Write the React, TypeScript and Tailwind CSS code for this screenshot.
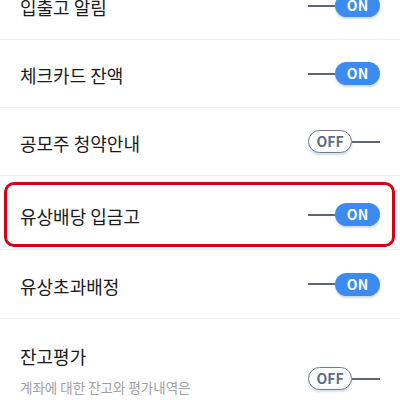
import React from "react";

type Row = {
  title: string;
  on: boolean;
  desc?: string[];
  highlight?: boolean;
  h: string;
};

const rows: Row[] = [
  { title: "입출고 알림", on: true, h: "h-[68px]" },
  { title: "체크카드 잔액", on: true, h: "h-[68px]" },
  { title: "공모주 청약안내", on: false, h: "h-[68px]" },
  { title: "유상배당 입금고", on: true, highlight: true, h: "h-[74px]" },
  { title: "유상초과배정", on: true, h: "h-[69px]" },
  {
    title: "잔고평가",
    on: false,
    desc: ["계좌에 대한 잔고와 평가내역은", "매월 말일에 발송됩니다"],
    h: "h-[110px]",
  },
];

function Toggle({ on }: { on: boolean }) {
  if (on) {
    return (
      <div className="flex items-center">
        <div className="w-[27px] h-[2px] bg-[#5d6674]" />
        <div className="w-[45px] h-[23px] rounded-full bg-[#3b8bf2] flex items-center justify-center text-white text-[14px] font-bold shadow-[0_2px_2px_rgba(120,150,190,0.35)]">
          ON
        </div>
      </div>
    );
  }
  return (
    <div className="flex items-center">
      <div className="w-[44px] h-[23px] rounded-full border-[1.5px] border-[#6a7d96] bg-white flex items-center justify-center text-[#5d6f86] text-[14px] font-bold shadow-[0_2px_2px_rgba(120,150,190,0.3)]">
        OFF
      </div>
      <div className="w-[28px] h-[2px] bg-[#5d6674]" />
    </div>
  );
}

export default function App() {
  return (
    <div
      className="w-[400px] h-[400px] overflow-hidden bg-white"
      style={{ fontFamily: '"Noto Sans CJK KR", "Noto Sans", sans-serif' }}
    >
      <div className="-mt-[28px]">
        {rows.map((r, i) => {
          if (r.highlight) {
            return (
              <div key={i} className={`${r.h} border-b border-[#eeeeee] pl-[4px] pr-[5px] pt-[6px] pb-[2px]`}>
                <div className="h-full border-[3px] border-[#d5001a] rounded-[10px] flex items-center justify-between pl-[13px] pr-[12px]">
                  <span className="text-[18px] text-[#1a1a1a] pt-[3px]">{r.title}</span>
                  <Toggle on={r.on} />
                </div>
              </div>
            );
          }
          if (r.desc) {
            return (
              <div key={i} className={`${r.h} flex items-start justify-between pl-[20px] pr-[20px] pt-[24px]`}>
                <div className="flex flex-col">
                  <span className="text-[18px] leading-[26px] text-[#1a1a1a]">{r.title}</span>
                  <div className="mt-[8px] text-[13.5px] leading-[20px] text-[#a0a0a0]">
                    {r.desc.map((d, j) => (
                      <div key={j}>{d}</div>
                    ))}
                  </div>
                </div>
                <div className="mt-[24px]">
                  <Toggle on={r.on} />
                </div>
              </div>
            );
          }
          return (
            <div
              key={i}
              className={`${r.h} border-b border-[#eeeeee] flex items-center justify-between pl-[20px] pr-[20px]`}
            >
              <span className="text-[18px] text-[#1a1a1a] pt-[4px]">{r.title}</span>
              <Toggle on={r.on} />
            </div>
          );
        })}
      </div>
    </div>
  );
}
